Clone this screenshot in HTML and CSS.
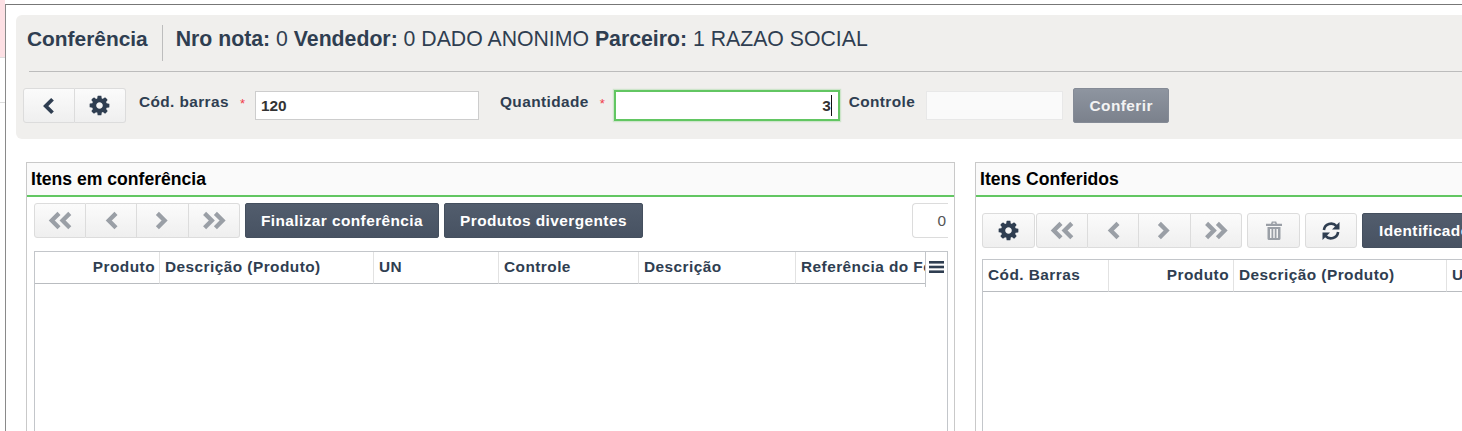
FILE: index.html
```html
<!DOCTYPE html>
<html lang="pt-BR">
<head>
<meta charset="utf-8">
<title>Conferência</title>
<link rel="stylesheet" href="styles.css">
</head>
<body>
<svg class="sprites" aria-hidden="true">
  <symbol id="i-cog" viewBox="0 0 1792 1792"><path d="M1152 896q0-106-75-181t-181-75-181 75-75 181 75 181 181 75 181-75 75-181zm512-109v222q0 12-8 23t-20 13l-185 28q-19 54-39 91 35 50 107 138 10 12 10 25t-9 23q-27 37-99 108t-94 71q-12 0-26-9l-138-108q-44 23-91 38-16 136-29 186-7 28-36 28h-222q-14 0-24.500-8.500t-11.500-21.500l-28-184q-49-16-90-37l-141 107q-10 9-25 9-14 0-25-11-126-114-165-168-7-10-7-23 0-12 8-23 15-21 51-66.500t54-70.500q-27-50-41-99l-183-27q-13-2-21-12.500t-8-23.500v-222q0-12 8-23t19-13l186-28q14-46 39-92-40-57-107-138-10-12-10-24 0-10 9-23 26-36 98.500-107.500t94.500-71.500q13 0 26 10l138 107q44-23 91-38 16-136 29-186 7-28 36-28h222q14 0 24.500 8.500t11.500 21.500l28 184q49 16 90 37l142-107q9-9 24-9 13 0 25 10 129 119 165 170 7 8 7 22 0 12-8 23-15 21-51 66.500t-54 70.500q26 50 41 98l183 28q13 2 21 12.500t8 23.500z"/></symbol>
  <symbol id="i-back" viewBox="0 0 12 16"><polyline points="10,2 4,8 10,14" fill="none" stroke="currentColor" stroke-width="3.400"/></symbol>
  <symbol id="i-first" viewBox="0 0 22 16"><polyline points="10,2 4,8 10,14" fill="none" stroke="currentColor" stroke-width="3.600"/><polyline points="19,2 13,8 19,14" fill="none" stroke="currentColor" stroke-width="3.600"/></symbol>
  <symbol id="i-prev" viewBox="0 0 12 16"><polyline points="10,2 4,8 10,14" fill="none" stroke="currentColor" stroke-width="3.600"/></symbol>
  <symbol id="i-next" viewBox="0 0 12 16"><polyline points="2,2 8,8 2,14" fill="none" stroke="currentColor" stroke-width="3.600"/></symbol>
  <symbol id="i-last" viewBox="0 0 22 16"><polyline points="3,2 9,8 3,14" fill="none" stroke="currentColor" stroke-width="3.600"/><polyline points="12,2 18,8 12,14" fill="none" stroke="currentColor" stroke-width="3.600"/></symbol>
  <symbol id="i-trash" viewBox="0 0 16 19"><path d="M5 2.800 L5.800 .5 H10.200 L11 2.800 H16 V5 H0 V2.800 Z M6.600 2.800 H9.400 L9 1.700 H7 Z"/><path fill-rule="evenodd" d="M1.500 6 H14.500 V17.500 Q14.500 19 13 19 H3 Q1.500 19 1.500 17.500 Z M4 8 V17 H5.500 V8 Z M7.250 8 V17 H8.750 V8 Z M10.500 8 V17 H12 V8 Z"/></symbol>
  <symbol id="i-refresh" viewBox="0 0 20 20"><path d="M2.900 9A7.200 7.200 0 0 1 15.500 5.200" fill="none" stroke="currentColor" stroke-width="2.600"/><path d="M18.500 1V8.500H11Z"/><path d="M17.100 11A7.200 7.200 0 0 1 4.500 14.800" fill="none" stroke="currentColor" stroke-width="2.600"/><path d="M1.500 19V11.500H9Z"/></symbol>
  <symbol id="i-bars" viewBox="0 0 15 12"><rect width="15" height="2.600" y="0"/><rect width="15" height="2.600" y="4.700"/><rect width="15" height="2.600" y="9.400"/></symbol>
</svg>

<div class="desk">
  <div class="desk-pink"></div>
  <div class="desk-line"></div>
</div>

<main class="win">
  <section class="head">
    <div class="head-title">
      <h1 class="title">Conferência</h1>
      <p class="meta"><b>Nro nota:</b> 0 <b>Vendedor:</b> 0 DADO ANONIMO <b>Parceiro:</b> 1 RAZAO SOCIAL</p>
    </div>
    <hr class="head-rule">
    <form class="entry">
      <div class="btn-group">
        <button type="button" class="tool w-back"><svg class="ico ico-back"><use href="#i-back"/></svg></button>
        <button type="button" class="tool w-back"><svg class="ico ico-cog"><use href="#i-cog"/></svg></button>
      </div>
      <label class="lbl lbl-barras">Cód. barras</label><span class="req req-barras">*</span>
      <input class="field field-barras" value="120">
      <label class="lbl lbl-qtd">Quantidade</label><span class="req req-qtd">*</span>
      <div class="field-qtd"><span class="qtd-val">3</span></div>
      <label class="lbl lbl-ctrl">Controle</label>
      <input class="field field-ctrl" disabled>
      <button type="button" class="dark dark-off">Conferir</button>
    </form>
  </section>

  <div class="panels">
    <section class="panel panel-left">
      <h2 class="panel-title">Itens em conferência</h2>
      <div class="bar bar-left">
        <div class="btn-group">
          <button type="button" class="tool w-nav off"><svg class="ico ico-dbl"><use href="#i-first"/></svg></button>
          <button type="button" class="tool w-nav off"><svg class="ico ico-sgl"><use href="#i-prev"/></svg></button>
          <button type="button" class="tool w-nav off"><svg class="ico ico-sgl"><use href="#i-next"/></svg></button>
          <button type="button" class="tool w-nav off"><svg class="ico ico-dbl"><use href="#i-last"/></svg></button>
        </div>
        <button type="button" class="dark w-final">Finalizar conferência</button>
        <button type="button" class="dark w-div">Produtos divergentes</button>
        <div class="counter"><span>0</span></div>
      </div>
      <div class="grid grid-left">
        <table class="cols cols-left">
          <colgroup><col class="c125"><col class="c214"><col class="c125b"><col class="c140"><col class="c157"><col class="c130"></colgroup>
          <thead><tr>
            <th class="num">Produto</th><th>Descrição (Produto)</th><th>UN</th><th>Controle</th><th>Descrição</th><th class="clip">Referência do Fornecedor</th>
          </tr></thead>
        </table>
        <div class="col-menu"><svg class="ico ico-bars"><use href="#i-bars"/></svg></div>
      </div>
    </section>

    <section class="panel panel-right">
      <h2 class="panel-title">Itens Conferidos</h2>
      <div class="bar bar-right">
        <button type="button" class="tool solo w-cog"><svg class="ico ico-cog"><use href="#i-cog"/></svg></button>
        <div class="btn-group">
          <button type="button" class="tool w-nav off"><svg class="ico ico-dbl"><use href="#i-first"/></svg></button>
          <button type="button" class="tool w-nav off"><svg class="ico ico-sgl"><use href="#i-prev"/></svg></button>
          <button type="button" class="tool w-nav off"><svg class="ico ico-sgl"><use href="#i-next"/></svg></button>
          <button type="button" class="tool w-nav off"><svg class="ico ico-dbl"><use href="#i-last"/></svg></button>
        </div>
        <button type="button" class="tool solo w-cog off"><svg class="ico ico-trash"><use href="#i-trash"/></svg></button>
        <button type="button" class="tool solo w-ref"><svg class="ico ico-refresh"><use href="#i-refresh"/></svg></button>
        <button type="button" class="dark w-ident">Identificador</button>
      </div>
      <div class="grid grid-right">
        <table class="cols cols-right">
          <colgroup><col class="r126"><col class="r125"><col class="r213"><col class="r100"></colgroup>
          <thead><tr>
            <th>Cód. Barras</th><th class="num">Produto</th><th>Descrição (Produto)</th><th>UN</th>
          </tr></thead>
        </table>
      </div>
    </section>
  </div>
</main>
</body>
</html>
```

FILE: styles.css
```css
* { box-sizing: border-box; }

html, body { height: 100%; }

body {
  margin: 0;
  display: flex;
  overflow: hidden;
  background: #fff;
  font-family: "Liberation Sans", Arial, sans-serif;
  color: #2f3e51;
}

.sprites { display: none; }

/* sliver of the window behind */
.desk { flex: 0 0 5px; }
.desk-pink {
  height: 58px;
  background: #fde0e4;
  border-bottom: 1px solid #ddd;
}
.desk-line {
  height: 1px;
  margin-top: 44px;
  background: #ddd;
}

.win {
  flex: 1 0 0;
  min-width: 0;
  margin-top: 4px;
  padding: 10px 0 0 10px;
  border-top: 1px solid #777;
  border-left: 1px solid #8a8a8a;
  overflow: hidden;
}

/* header */
.head {
  width: 1500px;
  height: 124px;
  padding: 0 0 0 7px;
  background: #f0efed;
  border-radius: 6px;
}

.head-title {
  display: flex;
  align-items: center;
  height: 56px;
  padding: 0 0 0 4px;
}

.title {
  margin: 0;
  padding-right: 14px;
  height: 36px;
  line-height: 27px;
  border-right: 1px solid #bdbdbd;
  font-size: 20.900px;
  font-weight: 700;
  color: #2f3e51;
}

.meta {
  margin: 0 0 0 13px;
  font-size: 21.250px;
  line-height: 36px;
  padding-bottom: 9px;
  white-space: nowrap;
  color: #2f3e51;
}

.head-rule {
  margin: 0 0 0 6px;
  border: 0;
  height: 1px;
  background: #bcbcbc;
}

.entry {
  display: flex;
  align-items: flex-start;
  margin-top: 16px;
}

.btn-group { display: flex; flex: none; }

.tool {
  flex: none;
  display: flex;
  align-items: center;
  justify-content: center;
  height: 35px;
  padding: 0;
  background: linear-gradient(#fbfbfb, #efefef);
  border: 1px solid #dcdcdc;
  border-left-width: 0;
  color: #2f3e51;
}
.btn-group .tool:first-child {
  border-left-width: 1px;
  border-radius: 3px 0 0 3px;
}
.btn-group .tool:last-child { border-radius: 0 3px 3px 0; }
.tool.solo { border-left-width: 1px; border-radius: 3px; }
.tool.off { color: #9a9fa6; }

.w-back { width: 51.500px; }
.w-nav { width: 51.500px; }
.w-cog { width: 53px; }
.w-ref { width: 52px; }

.ico { display: block; fill: currentColor; }
.ico-back { width: 14px; height: 18px; margin-left: -2px; }
.ico-cog { width: 23px; height: 23px; }
.ico-dbl { width: 26.400px; height: 19.200px; }
.ico-sgl { width: 14.400px; height: 19.200px; }
.ico-trash { width: 16px; height: 19px; }
.ico-refresh { width: 20px; height: 20px; }
.ico-bars { width: 15px; height: 12px; }

.lbl {
  font-size: 15.400px;
  font-weight: 700;
  line-height: 18px;
  margin-top: 5px;
  letter-spacing: .4px;
  white-space: nowrap;
}
.lbl-barras { margin-left: 13px; }
.lbl-qtd { margin-left: 21px; }
.lbl-ctrl { margin-left: 9px; }

.req {
  color: #f03a4a;
  font-size: 13px;
  line-height: 18px;
  margin-top: 7px;
}
.req-barras { margin-left: 11px; }
.req-qtd { margin-left: 11px; }

.field {
  height: 29px;
  margin-top: 3px;
  padding: 0 5px;
  border: 1px solid #cdcdcd;
  background: #fff;
  border-radius: 0;
  font: 700 15.400px "Liberation Sans", Arial, sans-serif;
  color: #333;
}
.field-barras { width: 224px; margin-left: 10px; }
.field-ctrl { width: 137px; margin-left: 11px; background: #fafafa; border-color: #e8e8e8; }

.field-qtd {
  width: 226px;
  height: 31px;
  margin: 2px 0 0 9px;
  padding: 0 6px;
  display: flex;
  align-items: center;
  justify-content: flex-end;
  background: #fff;
  border: 2px solid #62c662;
  box-shadow: 0 0 1px 1px rgba(98, 198, 98, .25);
}
.qtd-val {
  font-size: 15.400px;
  font-weight: 700;
  color: #333;
  line-height: 21px;
  border-right: 1px solid #111;
}

.dark {
  flex: none;
  height: 35px;
  padding: 0;
  border: 1px solid #444f5e;
  border-radius: 2px;
  background: linear-gradient(#525d6d, #475262);
  color: #fff;
  font: 700 15.400px "Liberation Sans", Arial, sans-serif;
  letter-spacing: .43px;
  white-space: nowrap;
}
.dark-off {
  width: 96px;
  margin-left: 10px;
  border-color: #858b96;
  background: linear-gradient(#8e95a0, #7b818c);
  color: #f3f3f3;
}
.w-final { width: 194px; margin-left: 5px; }
.w-div { width: 199px; margin-left: 5px; }
.w-ident {
  width: 160px;
  margin-left: 4px;
  text-align: left;
  padding-left: 16px;
}

/* panels */
.panels {
  display: flex;
  align-items: flex-start;
  margin: 23px 0 0 10px;
  width: 1500px;
}

.panel {
  flex: none;
  height: 300px;
  padding: 0;
  border: 1px solid #c9c9c9;
  overflow: hidden;
}
.panel-left { width: 929px; margin-right: 20px; }
.panel-right { width: 530px; }

.panel-title {
  margin: 0;
  height: 34px;
  padding: 0 0 0 4px;
  background: #fafafa;
  border-bottom: 2px solid #62c662;
  color: #000;
  font-size: 17.600px;
  font-weight: 700;
  line-height: 33px;
}

.bar { display: flex; align-items: flex-start; }
.bar-left { padding: 6px 0 0 7px; width: 921px; }
.bar-right { padding: 16px 0 0 6px; gap: 1px; }
.bar-right .btn-group { margin-right: 4px; }
.bar-right .w-ref { margin-left: 4px; }

.counter {
  width: 36px;
  height: 35px;
  margin-left: auto;
  padding-right: 2px;
  border: 1px solid #dcdcdc;
  border-right: 0;
  border-radius: 4px 0 0 4px;
  background: #fff;
  font-size: 15.400px;
  line-height: 33px;
  text-align: right;
  color: #555;
}

.grid {
  display: flex;
  align-items: flex-start;
  height: 200px;
  margin: 13px 0 0 7px;
  border: 1px solid #c3c6ca;
  border-bottom: 0;
}
.grid-left { width: 914px; }
.grid-right { width: 540px; margin: 11px 0 0 6px; }

.cols {
  table-layout: fixed;
  border-collapse: separate;
  border-spacing: 0;
  flex: none;
}
.cols-left { width: 890px; }
.cols-right { width: 564px; }

.cols th {
  height: 32px;
  padding: 0 5px 1px;
  text-align: left;
  font-size: 15.400px;
  font-weight: 700;
  letter-spacing: .45px;
  white-space: nowrap;
  overflow: hidden;
  border-right: 1px solid #e2e2e2;
  border-bottom: 1px solid #b9bcc0;
  color: #2f3e51;
}
.cols th.num { text-align: right; padding-right: 4px; }
.cols th.clip { border-right: 0; }

.c125 { width: 125px; }
.c214 { width: 214px; }
.c125b { width: 125px; }
.c140 { width: 140px; }
.c157 { width: 157px; }
.c130 { width: 129px; }
.r126 { width: 126px; }
.r125 { width: 125px; }
.r213 { width: 213px; }
.r100 { width: 100px; }

.col-menu {
  flex: none;
  width: 23px;
  height: 35px;
  padding: 9px 0 0 3px;
  border-left: 1px solid #c3c6ca;
  color: #2f3e51;
}
```
